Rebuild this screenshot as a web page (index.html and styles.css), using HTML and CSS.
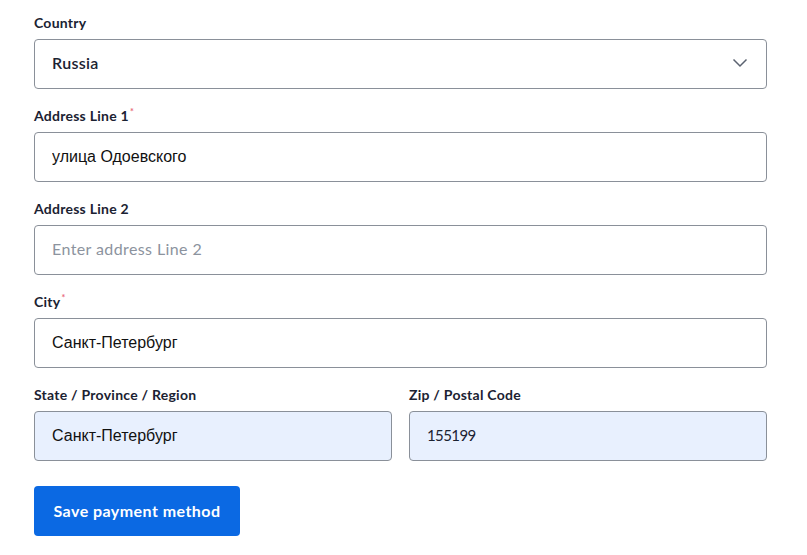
FILE: index.html
```html
<!DOCTYPE html>
<html>
<head>
<meta charset="utf-8">
<link rel="stylesheet" href="styles.css">
</head>
<body>
<form class="form">
  <div class="field">
    <label class="label">Country</label>
    <div class="control select">
      <span class="value">Russia</span>
      <svg class="chevron" width="16" height="10" viewBox="0 0 16 10"><path d="M1.5 1.5 L8 8 L14.5 1.5" fill="none" stroke="#5b6270" stroke-width="1.5"/></svg>
    </div>
  </div>
  <div class="field">
    <label class="label">Address Line 1<span class="req">*</span></label>
    <input class="control cyr" type="text" value="улица Одоевского">
  </div>
  <div class="field">
    <label class="label">Address Line 2</label>
    <input class="control" type="text" placeholder="Enter address Line 2">
  </div>
  <div class="field">
    <label class="label">City<span class="req">*</span></label>
    <input class="control cyr" type="text" value="Санкт-Петербург">
  </div>
  <div class="row">
    <div class="field">
      <label class="label">State / Province / Region</label>
      <input class="control cyr filled" type="text" value="Санкт-Петербург">
    </div>
    <div class="field">
      <label class="label">Zip / Postal Code</label>
      <input class="control filled digits" type="text" value="155199">
    </div>
  </div>
  <button class="btn" type="button">Save payment method</button>
</form>
</body>
</html>
```
FILE: styles.css
```css
* { box-sizing: border-box; }
body {
  margin: 0;
  padding: 14px 40px 0 34px;
  background: #ffffff;
  font-family: "Lato", "Liberation Sans", sans-serif;
  color: #1b2232;
}
.form {
  display: flex;
  flex-direction: column;
  width: 733px;
}
.field {
  display: flex;
  flex-direction: column;
  margin-bottom: 18px;
}
.label {
  font-size: 14px;
  font-weight: 700;
  line-height: 17px;
  letter-spacing: 0.25px;
  margin-bottom: 8px;
  color: #1b2232;
}
.req {
  color: #e86a7a;
  font-size: 9px;
  vertical-align: top;
  line-height: 10px;
  margin-left: 1px;
}
.control {
  height: 50px;
  width: 100%;
  border: 1px solid #8a9099;
  border-radius: 4px;
  background: #ffffff;
  padding: 0 17px 3px;
  font-family: "Lato", "Liberation Sans", sans-serif;
  font-size: 16px;
  letter-spacing: 0.4px;
  color: #1b2232;
  outline: none;
}
.control::placeholder { color: #8c939e; }
.cyr {
  padding-bottom: 1px;
  font-family: "Liberation Sans", sans-serif;
  font-size: 16px;
  letter-spacing: 0;
  color: #111;
}
.digits { font-size: 15px; letter-spacing: -0.6px; }
.filled { background: #e8f0fe; }
.select {
  display: flex;
  align-items: center;
  justify-content: space-between;
  padding-right: 18px;
}
.select .value { font-weight: 600; letter-spacing: 0.3px; }
.row {
  display: grid;
  grid-template-columns: 358px 358px;
  column-gap: 17px;
}
.btn {
  margin-top: 7px;
  width: 206px;
  height: 50px;
  padding-bottom: 2px;
  border: none;
  border-radius: 4px;
  background: #0b69e3;
  color: #ffffff;
  font-family: "Lato", "Liberation Sans", sans-serif;
  font-size: 16px;
  font-weight: 700;
  letter-spacing: 0.45px;
  cursor: pointer;
}
```
